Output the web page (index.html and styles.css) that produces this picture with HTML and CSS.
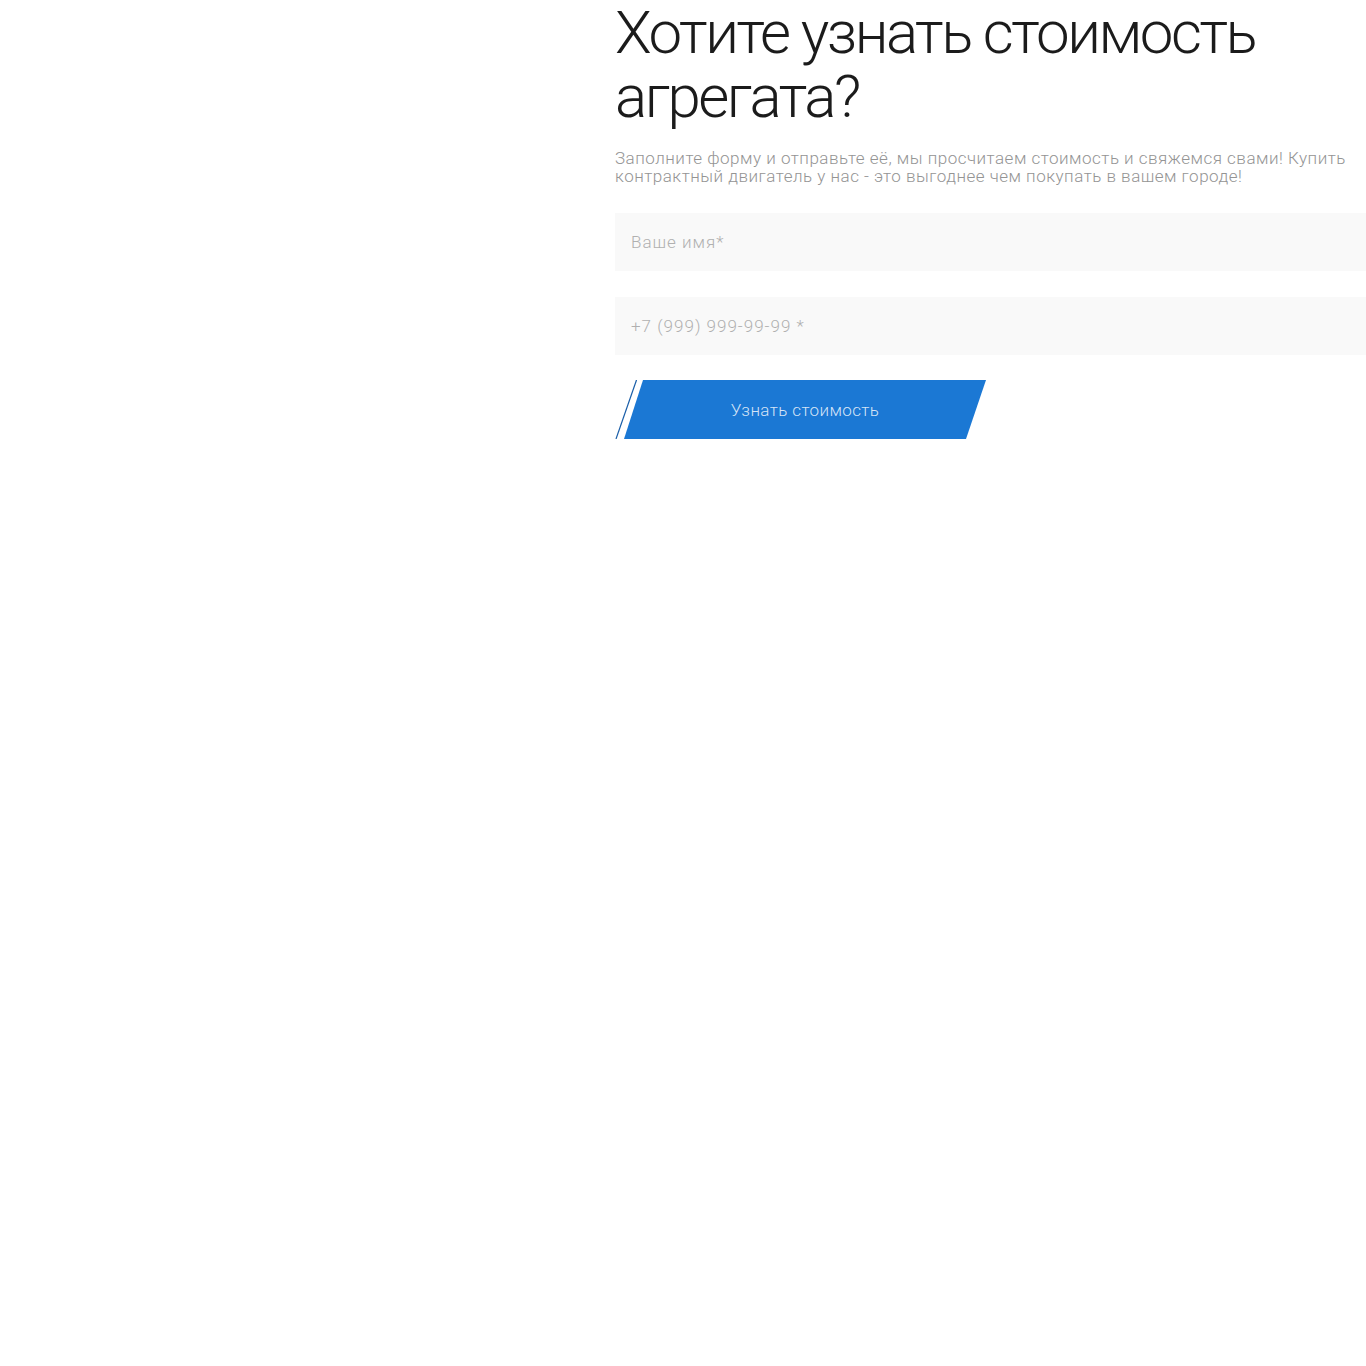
FILE: index.html
```html
<!DOCTYPE html>
<html lang="ru">
<head>
    <meta charset="UTF-8">
    <meta name="viewport" content="width=device-width, initial-scale=1.0">
    <title>Узнать стоимость агрегата</title>
    <link rel="stylesheet" href="styles.css">
</head>
<body>
    <section class="price-request">
        <div class="price-media"></div>

        <div class="price-form-wrap">
            <h2 class="price-title">Хотите узнать стоимость агрегата?</h2>
            <p class="price-lead">Заполните форму и отправьте её, мы просчитаем стоимость и свяжемся свами! Купить контрактный двигатель у нас - это выгоднее чем покупать в вашем городе!</p>

            <form class="price-form" id="price-form">
                <input type="text" name="name" class="field" placeholder="Ваше имя*" required>
                <input type="tel" name="phone" class="field" placeholder="+7 (999) 999-99-99 *" required>

                <button type="submit" class="btn-skew">
                    <svg class="btn-stripe" width="22" height="59" viewBox="0 0 22 59">
                        <line x1="21.5" y1="0" x2="1" y2="59" stroke="#1a5ea8" stroke-width="1.2"/>
                    </svg>
                    <span class="btn-body">Узнать стоимость</span>
                </button>
            </form>
        </div>
    </section>
</body>
</html>
```

FILE: styles.css
```css
* {
    margin: 0;
    padding: 0;
    box-sizing: border-box;
}

body {
    font-family: Roboto, 'Open Sans', sans-serif;
    background: #fff;
    color: #1a1a1a;
}

.price-request {
    display: grid;
    grid-template-columns: 615px 1fr;
    min-height: 1366px;
}

.price-form-wrap {
    padding-top: 1px;
}

.price-title {
    font-weight: 300;
    font-size: 60px;
    line-height: 64px;
    letter-spacing: -2.5px;
    color: #1b1b1b;
    max-width: 700px;
}

.price-lead {
    margin-top: 20px;
    font-weight: 300;
    font-size: 17px;
    line-height: 18px;
    letter-spacing: 0.5px;
    color: #949494;
}

.price-form {
    display: flex;
    flex-direction: column;
    gap: 26px;
    margin-top: 28px;
}

.field {
    display: block;
    width: 100%;
    height: 58px;
    padding: 0 16px;
    border: none;
    background: #f9f9f9;
    font-family: Roboto, sans-serif;
    font-weight: 300;
    font-size: 17px;
    letter-spacing: 1px;
    color: #333;
}

.field::placeholder {
    color: #b0b0b0;
}

.field:focus {
    outline: none;
    background: #f3f3f3;
}

.btn-skew {
    display: flex;
    align-items: stretch;
    width: 371px;
    height: 59px;
    margin-top: -1px;
    border: none;
    background: none;
    cursor: pointer;
}

.btn-stripe {
    flex: none;
    display: block;
}

.btn-body {
    flex: 1;
    margin-left: -13px;
    display: flex;
    align-items: center;
    justify-content: center;
    background: #1b78d4;
    clip-path: polygon(19px 0, 100% 0, calc(100% - 20px) 100%, 0 100%);
    font-family: Roboto, sans-serif;
    font-weight: 300;
    font-size: 17px;
    letter-spacing: 0.4px;
    color: rgba(255, 255, 255, 0.82);
}

.btn-skew:hover .btn-body {
    background: #1565c0;
}
```
